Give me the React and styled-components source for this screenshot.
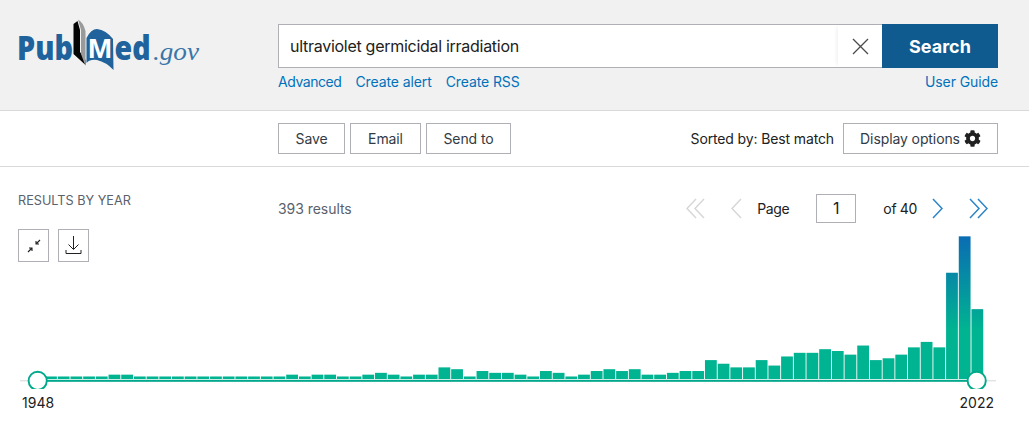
import React from "react";
import styled, { createGlobalStyle } from "styled-components";
import { FaCog } from "react-icons/fa";

const Global = createGlobalStyle`
  html, body { margin: 0; padding: 0; background: #fff; }
  body { font-family: Inter, "Liberation Sans", sans-serif; color: #212121; overflow: hidden; }
`;

const Page = styled.div`width: 1029px; height: 426px; overflow: hidden;`;

const Header = styled.header`
  height: 111px; box-sizing: border-box; background: #f1f1f1; border-bottom: 1px solid #d9d9d9;
  display: grid; grid-template-columns: 278px 720px; padding-top: 24px;
`;
const LogoSvg = styled.svg`display: block; width: 278px; height: 86px; margin-top: -24px;`;
const SearchColumn = styled.div`display: flex; flex-direction: column;`;
const SearchBar = styled.div`display: flex; height: 44px;`;
const SearchField = styled.div`
  flex: 1; display: flex; align-items: center; justify-content: space-between; background: #fff;
  border: 1px solid #aeb0b5; border-right: 0; box-sizing: border-box;
`;
const Query = styled.span`font-size: 16px; padding-left: 11px; color: #212121; letter-spacing: -0.28px;`;
const Clear = styled.button`
  width: 44px; height: 42px; border: 0; padding: 0; background: #fff; display: flex;
  align-items: center; justify-content: center; box-shadow: -3px 0 4px -2px rgba(0,0,0,.07);
`;
const SearchButton = styled.button`
  width: 116px; border: 0; background: #0f5a8e; color: #fff; font: 700 18px Inter, sans-serif;
`;
const LinkRow = styled.div`display: flex; gap: 14px; margin-top: 6px; line-height: 16px;`;
const TextLink = styled.a`
  color: #0071bc; font-size: 14px; text-decoration: none;
  letter-spacing: ${p => (p.$tight ? "-0.45px" : "-0.1px")};
  margin-left: ${p => (p.$end ? "auto" : "0")};
`;

const Toolbar = styled.div`
  height: 56px; box-sizing: border-box; border-bottom: 1px solid #d9d9d9; padding: 12px 31px 0 278px;
  display: flex; align-items: flex-start; gap: 5px;
`;
const ToolButton = styled.button`
  height: 31px; box-sizing: border-box; width: ${p => p.$w}px; background: #fff; border: 1px solid #aeb0b5;
  color: #323a45; font: 400 14px Inter, sans-serif; padding: 0; display: flex; align-items: center;
  justify-content: center; gap: 4px; letter-spacing: -0.1px;
`;
const Sorted = styled.span`
  margin-left: auto; margin-right: 4px; font-size: 14px; line-height: 31px; color: #212121; letter-spacing: -0.13px;
`;

const Results = styled.section`
  display: grid; grid-template-columns: 278px 720px; height: 70px;
`;
const YearColumn = styled.div`padding: 26px 0 0 18px;`;
const YearTitle = styled.h2`
  margin: 0; font-size: 12.7px; font-weight: 400; line-height: 16px; color: #5b616b; text-transform: uppercase;
`;
const IconRow = styled.div`display: flex; gap: 9px; margin-top: 20px; position: relative; z-index: 1;`;
const IconButton = styled.button`
  width: 31px; height: 33px; box-sizing: border-box; background: #fff; border: 1px solid #aeb0b5; padding: 0;
  display: flex; align-items: center; justify-content: center;
`;
const ResultsBar = styled.div`display: flex; align-items: center; height: 30px; margin-top: 26px;`;
const Count = styled.span`font-size: 14px; color: #5b616b; margin-right: auto; letter-spacing: -0.05px;`;
const Pager = styled.nav`display: flex; align-items: center; font-size: 14px; color: #212121;`;
const PagerText = styled.span`margin: 0 ${p => p.$r}px 0 ${p => p.$l}px; letter-spacing: -0.35px;`;
const PageInput = styled.div`
  width: 40px; height: 29px; box-sizing: border-box; border: 1px solid #aeb0b5; display: flex;
  align-items: center; justify-content: center; font-size: 16px;
`;
const Chevron = styled.svg`display: block; margin-left: ${p => p.$l || 0}px; flex: none;`;

const ChartSvg = styled.svg`display: block; width: 1029px; height: 160px; margin-top: -8px;`;
const YearLabels = styled.div`
  display: flex; justify-content: space-between; padding: 0 35px 0 22px; font-size: 14px; line-height: 16px;
  color: #212121; margin-top: 6px;
`;

const levels = [1,1,1,1,1,1,2,2,1,1,1,1,1,1,1,1,1,1,1,1,2,1,2,2,1,1,2,3,2,1,2,2,6,5,1,4,3,3,2,1,4,3,1,2,4,5,4,5,2,2,3,4,4,10,8,6,6,10,7,12,14,14,16,15,13,18,10,11,13,17,20,17,58,78,38];

function Logo() {
  return (
    <LogoSvg viewBox="0 0 278 86">
      <text x="17" y="59.5" fontFamily="'Open Sans', sans-serif" fontWeight="800" fontSize="33" fill="#20629b" textLength="56" lengthAdjust="spacingAndGlyphs">Pub</text>
      <path d="M73.5 24 L77.5 21 L80 30 L80 52 L85.5 60 L85.5 65 L73.5 54 Z" fill="#050505" />
      <path d="M78 19.5 Q83 22 85.5 31 L85.5 66 L81 54 L81 30 Z" fill="#9a9a9a" />
      <path d="M86.5 38 Q91 29 97 29 Q106 30 113 39 L113.5 70 Q106 62 97 60 Q90 59 86.5 63 Z" fill="#20629b" />
      <text x="88" y="57.5" fontFamily="'Liberation Sans', sans-serif" fontWeight="700" fontSize="28" fill="#fff" textLength="24" lengthAdjust="spacingAndGlyphs">M</text>
      <text x="114.5" y="59.5" fontFamily="'Open Sans', sans-serif" fontWeight="800" fontSize="33" fill="#20629b" textLength="36" lengthAdjust="spacingAndGlyphs">ed</text>
      <text x="153" y="60" fontFamily="'Liberation Serif', serif" fontStyle="italic" fontSize="25" fill="#3a75a8" textLength="46" lengthAdjust="spacingAndGlyphs">.gov</text>
    </LogoSvg>
  );
}

function Single({ dir, color, l }) {
  const d = dir === "left" ? "M10 1 L1 10.5 L10 20" : "M1 1 L10 10.5 L1 20";
  return (
    <Chevron $l={l} width="11" height="21" viewBox="0 0 11 21" fill="none" stroke={color} strokeWidth="1.5">
      <path d={d} />
    </Chevron>
  );
}
function Double({ dir, color, l }) {
  const d = dir === "left"
    ? "M10 1 L1 10.5 L10 20 M18 1 L9 10.5 L18 20"
    : "M1 1 L10 10.5 L1 20 M9 1 L18 10.5 L9 20";
  return (
    <Chevron $l={l} width="19" height="21" viewBox="0 0 19 21" fill="none" stroke={color} strokeWidth="1.5">
      <path d={d} />
    </Chevron>
  );
}

function Chart() {
  const top = 229; // page y of the drawing's top edge
  const base = 379 - top;
  const axis = 380.8 - top;
  const pitch = 12.69;
  return (
    <ChartSvg viewBox="0 0 1029 160">
      <defs>
        <linearGradient id="barFill" gradientUnits="userSpaceOnUse" x1="0" y1="8" x2="0" y2="100">
          <stop offset="0" stopColor="#0a6db3" />
          <stop offset="1" stopColor="#00b391" />
        </linearGradient>
      </defs>
      {levels.map((n, i) => {
        const h = 0.7 + 1.82 * n;
        return <rect key={i} x={32 + pitch * i + 0.4} y={base - h} width={pitch - 0.9} height={h} fill="url(#barFill)" />;
      })}
      <rect x="20" y={axis - 0.5} width="976" height="1" fill="#d6d6d6" />
      <rect x="38" y={axis - 1} width="939" height="2" fill="#00a98c" />
      {[37.7, 976.7].map(cx => (
        <circle key={cx} cx={cx} cy={axis} r="9.1" fill="#fff" stroke="#00a98c" strokeWidth="1.9" />
      ))}
    </ChartSvg>
  );
}

export default function App() {
  return (
    <Page>
      <Global />
      <Header>
        <Logo />
        <SearchColumn>
          <SearchBar>
            <SearchField>
              <Query>ultraviolet germicidal irradiation</Query>
              <Clear aria-label="Clear">
                <svg width="17" height="17" viewBox="0 0 17 17" stroke="#4a4a4a" strokeWidth="1.3" fill="none"><path d="M1 1 L16 16 M16 1 L1 16" /></svg>
              </Clear>
            </SearchField>
            <SearchButton>Search</SearchButton>
          </SearchBar>
          <LinkRow>
            <TextLink $tight>Advanced</TextLink>
            <TextLink>Create alert</TextLink>
            <TextLink>Create RSS</TextLink>
            <TextLink $end>User Guide</TextLink>
          </LinkRow>
        </SearchColumn>
      </Header>
      <Toolbar>
        <ToolButton $w={67}>Save</ToolButton>
        <ToolButton $w={71}>Email</ToolButton>
        <ToolButton $w={85}>Send to</ToolButton>
        <Sorted>Sorted by: Best match</Sorted>
        <ToolButton $w={155}>Display options <FaCog size={17} color="#212121" /></ToolButton>
      </Toolbar>
      <Results>
        <YearColumn>
          <YearTitle>Results by year</YearTitle>
          <IconRow>
            <IconButton aria-label="Collapse">
              <svg width="14" height="14" viewBox="0 0 14 14" fill="none" stroke="#212121" strokeWidth="1.1">
                <path d="M13 1 L9 5 M9 2 L9 5 L12 5 M1 13 L5 9 M2 9 L5 9 L5 12" />
              </svg>
            </IconButton>
            <IconButton aria-label="Download">
              <svg width="17" height="19" viewBox="0 0 17 19" fill="none" stroke="#212121" strokeWidth="1">
                <path d="M8.5 0 V13 M3.5 8.5 L8.5 13.5 L13.5 8.5 M1 14 V17.5 H16 V14" />
              </svg>
            </IconButton>
          </IconRow>
        </YearColumn>
        <ResultsBar>
          <Count>393 results</Count>
          <Pager>
            <Double dir="left" color="#d6d7d9" />
            <Single dir="left" color="#d6d7d9" l={26} />
            <PagerText $l={15} $r={27}>Page</PagerText>
            <PageInput>1</PageInput>
            <PagerText $l={27} $r={15}>of 40</PagerText>
            <Single dir="right" color="#2e85c7" />
            <Double dir="right" color="#2e85c7" l={26} />
            <Chevron $l={9} width="1" height="1" />
          </Pager>
        </ResultsBar>
      </Results>
      <Chart />
      <YearLabels>
        <span>1948</span>
        <span>2022</span>
      </YearLabels>
    </Page>
  );
}
